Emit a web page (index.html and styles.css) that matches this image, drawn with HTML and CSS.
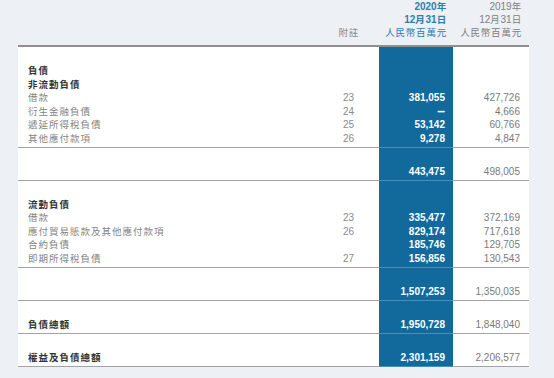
FILE: index.html
```html
<!DOCTYPE html>
<html lang="zh-Hant">
<head>
<meta charset="utf-8">
<title>負債</title>
<link rel="stylesheet" href="styles.css">
</head>
<body>
<div class="page">
  <div class="head">
    <div class="h-label"></div>
    <div class="h-note"><div class="hl">附註</div></div>
    <div class="h-cur">
      <div class="hl b"><span class="num">2020</span>年</div>
      <div class="hl b"><span class="num">12</span>月<span class="num">31</span>日</div>
      <div class="hl">人民幣百萬元</div>
    </div>
    <div class="h-prev">
      <div class="hl"><span class="num">2019</span>年</div>
      <div class="hl"><span class="num">12</span>月<span class="num">31</span>日</div>
      <div class="hl">人民幣百萬元</div>
    </div>
  </div>

  <div class="panel">
    <div class="sec">
      <div class="c label">
        <div class="r strong">負債</div>
        <div class="r strong">非流動負債</div>
        <div class="r">借款</div>
        <div class="r">衍生金融負債</div>
        <div class="r">遞延所得稅負債</div>
        <div class="r">其他應付款項</div>
      </div>
      <div class="c note">
        <div class="r"></div>
        <div class="r"></div>
        <div class="r">23</div>
        <div class="r">24</div>
        <div class="r">25</div>
        <div class="r">26</div>
      </div>
      <div class="c cur">
        <div class="r"></div>
        <div class="r"></div>
        <div class="r">381,055</div>
        <div class="r"><span class="dash">–</span></div>
        <div class="r">53,142</div>
        <div class="r">9,278</div>
      </div>
      <div class="c prev">
        <div class="r"></div>
        <div class="r"></div>
        <div class="r">427,726</div>
        <div class="r">4,666</div>
        <div class="r">60,766</div>
        <div class="r">4,847</div>
      </div>
    </div>

    <div class="sec">
      <div class="c label"><div class="r"></div></div>
      <div class="c note"><div class="r"></div></div>
      <div class="c cur"><div class="r">443,475</div></div>
      <div class="c prev"><div class="r">498,005</div></div>
    </div>

    <div class="sec">
      <div class="c label">
        <div class="r strong">流動負債</div>
        <div class="r">借款</div>
        <div class="r">應付貿易賬款及其他應付款項</div>
        <div class="r">合約負債</div>
        <div class="r">即期所得稅負債</div>
      </div>
      <div class="c note">
        <div class="r"></div>
        <div class="r">23</div>
        <div class="r">26</div>
        <div class="r"></div>
        <div class="r">27</div>
      </div>
      <div class="c cur">
        <div class="r"></div>
        <div class="r">335,477</div>
        <div class="r">829,174</div>
        <div class="r">185,746</div>
        <div class="r">156,856</div>
      </div>
      <div class="c prev">
        <div class="r"></div>
        <div class="r">372,169</div>
        <div class="r">717,618</div>
        <div class="r">129,705</div>
        <div class="r">130,543</div>
      </div>
    </div>

    <div class="sec">
      <div class="c label"><div class="r"></div></div>
      <div class="c note"><div class="r"></div></div>
      <div class="c cur"><div class="r">1,507,253</div></div>
      <div class="c prev"><div class="r">1,350,035</div></div>
    </div>

    <div class="sec">
      <div class="c label"><div class="r strong">負債總額</div></div>
      <div class="c note"><div class="r"></div></div>
      <div class="c cur"><div class="r">1,950,728</div></div>
      <div class="c prev"><div class="r">1,848,040</div></div>
    </div>

    <div class="sec">
      <div class="c label"><div class="r strong">權益及負債總額</div></div>
      <div class="c note"><div class="r"></div></div>
      <div class="c cur"><div class="r">2,301,159</div></div>
      <div class="c prev"><div class="r">2,206,577</div></div>
    </div>
  </div>
</div>
</body>
</html>
```

FILE: styles.css
```css
html, body {
  margin: 0;
  padding: 0;
  background: #edf0f4;
}

body {
  width: 554px;
  height: 378px;
  overflow: hidden;
  font-family: "Liberation Sans", "Noto Sans CJK TC", sans-serif;
  color: #7a7a7a;
}

.page {
  margin-left: 18px;
  width: 511px;
}

.head,
.sec {
  display: grid;
  grid-template-columns: 1fr 50px 74px 76px;
}

.head {
  height: 45px;
  box-sizing: border-box;
  padding-bottom: 6px;
  font-size: 9.5px;
}

.head > div {
  display: flex;
  flex-direction: column;
  justify-content: flex-end;
  align-items: flex-end;
}

.hl {
  height: 13px;
  line-height: 13px;
  font-family: "Noto Sans CJK TC", sans-serif;
  letter-spacing: 0.8px;
  white-space: nowrap;
}

.hl .num {
  font-family: "Liberation Sans", sans-serif;
  font-size: 10px;
  letter-spacing: 0;
}

.h-note {
  padding-right: 20px;
  color: #8a8a8a;
}

.h-cur {
  padding-right: 6px;
  color: #2f7db2;
}

.h-cur .b {
  font-weight: bold;
}

.h-prev {
  padding-right: 7px;
  color: #808080;
}

.panel {
  background: #ffffff;
  border-top: 2px solid #8e8e8e;
}

.c {
  padding-top: 17px;
  padding-bottom: 1.5px;
  border-bottom: 1px solid #a3a3a3;
}

.r {
  height: 13.5px;
  line-height: 13.5px;
  white-space: nowrap;
}

.label {
  padding-left: 10px;
  font-family: "Noto Sans CJK TC", sans-serif;
  font-size: 9.5px;
  letter-spacing: 1px;
  color: #858585;
}

.label .strong {
  font-weight: bold;
  color: #333333;
}

.note {
  padding-right: 25px;
  text-align: right;
  font-size: 10px;
  color: #8a8a8a;
}

.cur {
  background: #12699b;
  border-bottom-color: #4b8fb8;
  padding-right: 8px;
  text-align: right;
  font-size: 10px;
  font-weight: bold;
  color: #ffffff;
}

.dash {
  font-size: 14px;
}

.prev {
  padding-right: 9px;
  text-align: right;
  font-size: 10px;
  color: #7a7a7a;
}
```
